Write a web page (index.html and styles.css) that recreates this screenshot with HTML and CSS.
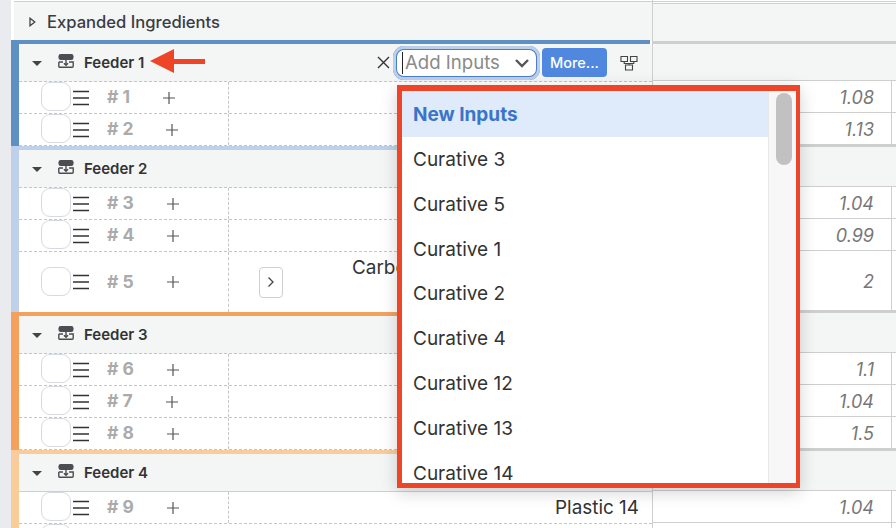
FILE: index.html
```html
<!DOCTYPE html>
<html lang="en">
<head>
<meta charset="utf-8">
<title>Feeders</title>
<link rel="stylesheet" href="styles.css">
</head>
<body>
<svg class="defs" width="0" height="0" aria-hidden="true">
  <symbol id="feeder" viewBox="0 0 16 14">
    <rect x="0.500" y="0" width="15" height="6" rx="2.200" fill="#4a4d52"/>
    <path d="M.8 8v4.300a1 1 0 0 0 1 1h12.400a1 1 0 0 0 1-1V8h-4.200M5 8H.8M8 6v5.500M5.900 9.200 8 11.300l2.100-2.100" fill="none" stroke="#4a4d52" stroke-width="1.400"/>
  </symbol>
  <symbol id="burger" viewBox="0 0 16 16">
    <path d="M0 1.500h16M0 8h16M0 14.500h16" stroke="#333" stroke-width="1.400" fill="none"/>
  </symbol>
  <symbol id="plus" viewBox="0 0 12 12">
    <path d="M6 0v12M0 6h12" stroke="#555" stroke-width="1.200" fill="none"/>
  </symbol>
</svg>
<div class="page">
  <div class="gutter"></div>
  <div class="frozen">
    <div class="expanded">
      <svg class="tri" width="7" height="10" viewBox="0 0 7 10"><path d="M1 1.200v7.600L5.800 5z" fill="none" stroke="#444" stroke-width="1.300"/></svg>
      <span class="expanded-label">Expanded Ingredients</span>
    </div>

    <section class="group g1">
      <div class="ghead">
        <span class="caret"></span>
        <svg class="ficon"><use href="#feeder"/></svg>
        <span class="gname">Feeder 1</span>
        <div class="tools">
          <svg class="close" width="13" height="13" viewBox="0 0 13 13"><path d="M1 1l11 11M12 1L1 12" stroke="#333" stroke-width="1.400" fill="none"/></svg>
          <div class="select"><span class="cursor"></span><span class="placeholder">Add Inputs</span>
            <svg class="chev" width="16" height="10" viewBox="0 0 16 10"><path d="M2 2l6 6 6-6" stroke="#555" stroke-width="2.400" fill="none"/></svg>
          </div>
          <button class="more">More...</button>
          <svg class="tree" width="18" height="16" viewBox="0 0 18 16"><path d="M1 1.500h6.500v5H1zM10.500 1.500H17v5h-6.500zM5.500 10h7v5h-7zM4.200 6.500V8.500h9.600V6.500M9 8.500V10" fill="none" stroke="#444" stroke-width="1.100"/></svg>
        </div>
      </div>
      <div class="row"><span class="check"></span><svg class="burger"><use href="#burger"/></svg><span class="num">#&nbsp;1</span><svg class="plus p1"><use href="#plus"/></svg><div class="name"></div></div>
      <div class="row"><span class="check"></span><svg class="burger"><use href="#burger"/></svg><span class="num">#&nbsp;2</span><svg class="plus p2"><use href="#plus"/></svg><div class="name"></div></div>
    </section>

    <section class="group g2">
      <div class="ghead"><span class="caret"></span><svg class="ficon"><use href="#feeder"/></svg><span class="gname">Feeder 2</span></div>
      <div class="row"><span class="check"></span><svg class="burger"><use href="#burger"/></svg><span class="num">#&nbsp;3</span><svg class="plus"><use href="#plus"/></svg><div class="name"></div></div>
      <div class="row"><span class="check"></span><svg class="burger"><use href="#burger"/></svg><span class="num">#&nbsp;4</span><svg class="plus"><use href="#plus"/></svg><div class="name"></div></div>
      <div class="row tall"><span class="check"></span><svg class="burger"><use href="#burger"/></svg><span class="num">#&nbsp;5</span><svg class="plus"><use href="#plus"/></svg>
        <div class="name name-top">
          <button class="expand"><svg width="8" height="12" viewBox="0 0 8 12"><path d="M1.500 1.500 6 6l-4.500 4.500" stroke="#444" stroke-width="1.300" fill="none"/></svg></button>
          <span class="carbon">Carbon Black Masterbatch Grade 5</span>
        </div>
      </div>
    </section>

    <section class="group g3">
      <div class="ghead"><span class="caret"></span><svg class="ficon"><use href="#feeder"/></svg><span class="gname">Feeder 3</span></div>
      <div class="row"><span class="check"></span><svg class="burger"><use href="#burger"/></svg><span class="num">#&nbsp;6</span><svg class="plus"><use href="#plus"/></svg><div class="name"></div></div>
      <div class="row"><span class="check"></span><svg class="burger"><use href="#burger"/></svg><span class="num">#&nbsp;7</span><svg class="plus p2"><use href="#plus"/></svg><div class="name"></div></div>
      <div class="row"><span class="check"></span><svg class="burger"><use href="#burger"/></svg><span class="num">#&nbsp;8</span><svg class="plus"><use href="#plus"/></svg><div class="name"></div></div>
    </section>

    <section class="group g4">
      <div class="ghead solid"><span class="caret"></span><svg class="ficon"><use href="#feeder"/></svg><span class="gname">Feeder 4</span></div>
      <div class="row"><span class="check"></span><svg class="burger"><use href="#burger"/></svg><span class="num">#&nbsp;9</span><svg class="plus"><use href="#plus"/></svg><div class="name">Plastic 14</div></div>
      <div class="row"><span class="check"></span></div>
    </section>
  </div>

  <div class="values">
    <div class="vtop"></div>
    <div class="vhead first"></div>
    <div class="vrow">1.08</div>
    <div class="vrow">1.13</div>
    <div class="vhead"></div>
    <div class="vrow">1.04</div>
    <div class="vrow">0.99</div>
    <div class="vrow tall">2</div>
    <div class="vhead"></div>
    <div class="vrow">1.1</div>
    <div class="vrow">1.04</div>
    <div class="vrow">1.5</div>
    <div class="vhead"></div>
    <div class="vrow">1.04</div>
    <div class="vrow"></div>
  </div>

  <svg class="arrow" width="56" height="26" viewBox="0 0 56 26"><path d="M0 13 24 1v10h31v5H24v9z" fill="#ee4427"/></svg>

  <div class="popup">
    <div class="menu">
      <div class="opt active">New Inputs</div>
      <div class="opt">Curative 3</div>
      <div class="opt">Curative 5</div>
      <div class="opt">Curative 1</div>
      <div class="opt">Curative 2</div>
      <div class="opt">Curative 4</div>
      <div class="opt">Curative 12</div>
      <div class="opt">Curative 13</div>
      <div class="opt">Curative 14</div>
    </div>
    <div class="track"><div class="thumb"></div></div>
  </div>
</div>
</body>
</html>
```

FILE: styles.css
```css
* { box-sizing: border-box; }
html, body { margin: 0; height: 100%; overflow: hidden; background: #fff; }
body { font-family: Inter, "Liberation Sans", sans-serif; color: #333; }
.defs { position: absolute; }
.page { position: relative; display: flex; width: 896px; height: 528px; overflow: hidden; }
.gutter { width: 11px; background: #e9ebef; flex: none; }

.frozen { width: 642px; flex: none; border-right: 1px solid #cfcfcf; }
.expanded { height: 40px; margin-left: 3px; margin-top: 1px; border-top: 1px solid #cfcfcf; background: #f4f5f5; display: flex; align-items: center; padding-left: 15px; margin-bottom: -1px; }
.tri { margin-right: 11px; }
.expanded-label { font-size: 16.600px; font-weight: 500; color: #3a3d42; }

.group { border-left: 8px solid var(--band); }
.group::before { content: ""; display: block; height: 4px; margin-right: 2px; background: var(--band); }
.g1 { --band: #5f90c4; }
.g2 { --band: #bfd1e9; }
.g3 { --band: #f4a15e; }
.g4 { --band: #f8cc9b; }

.ghead { height: 38px; background: #f4f5f5; border-bottom: 1px dashed #c6c6c6; display: flex; align-items: center; padding-left: 13px; }
.ghead.solid { border-bottom: 1px solid #cfcfcf; }
.caret { width: 0; height: 0; border-left: 5px solid transparent; border-right: 5px solid transparent; border-top: 5px solid #444; margin-right: 16px; margin-top: 1px; }
.ficon { width: 16px; height: 14px; margin-right: 10px; margin-bottom: 3px; }
.gname { font-size: 15px; font-weight: 600; color: #333; }

.tools { margin-left: auto; display: flex; align-items: center; height: 100%; }
.close { margin-right: 3px; }
.select { width: 147px; height: 34px; margin-right: 2px; border-radius: 11px; background: #fff; box-shadow: inset 0 0 0 3px #bccfea, inset 0 0 0 4px #4a7ec9; display: flex; align-items: center; padding: 0 10px 0 9px; }
.cursor { width: 1px; height: 22px; background: #222; margin-right: 2px; flex: none; }
.placeholder { font-size: 18.600px; color: #8a8a8a; flex: 1; white-space: nowrap; margin-bottom: 2px; }
.more { width: 65px; height: 29px; border: 0; border-radius: 4px; background: #5088e0; color: #fff; font: 500 14.500px Inter, sans-serif; padding: 0; margin-right: 13px; }
.tree { margin-right: 14px; }

.row { height: 32px; display: flex; align-items: center; padding-left: 22px; border-bottom: 1px dashed #c6c6c6; background: #fff; }
.row.tall { height: 60px; border-bottom: 0; }
.check { width: 30px; height: 29px; margin-bottom: 2px; flex: none; border: 1px solid #d6dae0; border-radius: 9px; background: #fff; }
.burger { width: 16px; height: 16px; margin-left: 2px; flex: none; }
.num { width: 56px; margin-left: 18px; margin-bottom: 2px; font-size: 17.500px; font-weight: 700; color: #ababab; flex: none; white-space: nowrap; }
.plus { width: 12px; height: 12px; margin-left: 4px; margin-right: 49px; flex: none; }
.plus.p1 { margin-left: 0; margin-right: 53px; }
.plus.p2 { margin-left: 3px; margin-right: 50px; }
.name { flex: 1; min-width: 0; height: 100%; border-left: 1px dashed #c6c6c6; display: flex; align-items: center; justify-content: flex-end; padding: 0 13px 1px 0; font-size: 18.900px; color: #333; white-space: nowrap; overflow: hidden; }
.name-top { justify-content: flex-start; padding-left: 30px; padding-bottom: 0; }
.expand { width: 24px; height: 31px; flex: none; background: #fff; border: 1px solid #d0d0d0; border-radius: 4px; padding: 0; display: flex; align-items: center; justify-content: center; margin-right: 69px; }
.carbon { margin-bottom: 30px; }

.values { flex: 1; }
.vtop { height: 3px; margin-top: 1px; border-top: 1px solid #cfcfcf; margin-bottom: -1px; }
.vhead { height: 42px; background: #f4f5f5; border-top: 2px solid #cfcfcf; border-bottom: 1px solid #cfcfcf; }
.vhead.first { height: 78px; position: relative; border-top: 1px solid #cfcfcf; }
.vhead.first::after { content: ""; position: absolute; left: 0; right: 0; top: 37px; height: 3px; background: #cfcfcf; }
.vrow { height: 32px; padding-right: 22px; border-bottom: 1px solid #cfcfcf; background: linear-gradient(to left, #fff 4px, #cfcfcf 4px, #cfcfcf 5px, #fff 5px); text-align: right; font-size: 18px; font-style: italic; color: #777; line-height: 33px; }
.vrow.tall { height: 60px; line-height: 61px; }

.arrow { position: absolute; left: 150px; top: 48px; }

.popup { position: absolute; left: 397px; top: 85px; width: 403px; height: 403px; border-style: solid; border-color: #ee4427; border-width: 6px 4px 5px 5px; background: #fff; display: flex; box-shadow: 0 4px 16px rgba(0,0,0,.18); overflow: hidden; }
.menu { flex: 1; overflow: hidden; }
.opt { height: 44.800px; line-height: 46.800px; padding-left: 11px; font-size: 19px; color: #333; white-space: nowrap; }
.opt.active { height: 46px; line-height: 47px; background: #dfebfb; color: #3b74c9; font-weight: 700; }
.track { width: 28px; flex: none; background: #f7f7f7; border-left: 1px solid #e8e8e8; padding: 2px 4px 0 7px; }
.thumb { width: 16px; height: 72px; border-radius: 8px; background: #c1c1c1; }
```
